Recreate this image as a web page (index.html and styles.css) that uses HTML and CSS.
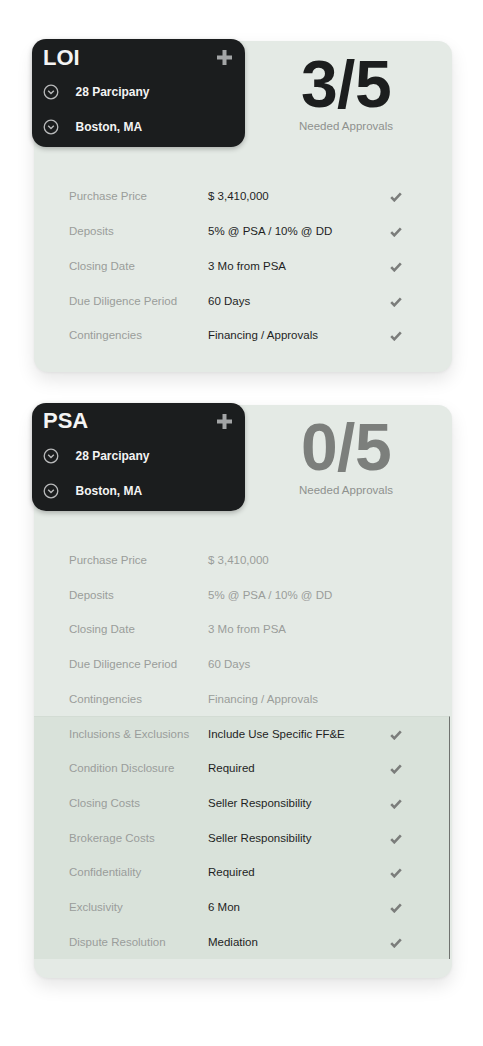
FILE: index.html
```html
<!DOCTYPE html>
<html lang="en">
<head>
<meta charset="utf-8">
<title>Deals</title>
<link rel="stylesheet" href="styles.css">
</head>
<body>
<main class="page">

  <section class="card">
    <div class="card-head">
      <div class="deal-box">
        <div class="deal-title">
          <span>LOI</span>
          <svg class="plus" viewBox="0 0 15 15" width="15" height="15"><path d="M7.5 0v15M0 7.5h15" stroke="#a3a5a6" stroke-width="4"/></svg>
        </div>
        <ul class="deal-items">
          <li><svg class="chev" viewBox="0 0 16 16" width="16" height="16"><circle cx="8" cy="8" r="6.8" fill="none" stroke="#b8b9ba" stroke-width="1.3"/><path d="M5.2 6.8 8 9.6l2.8-2.8" fill="none" stroke="#b8b9ba" stroke-width="1.4"/></svg><span>28 Parcipany</span></li>
          <li><svg class="chev" viewBox="0 0 16 16" width="16" height="16"><circle cx="8" cy="8" r="6.8" fill="none" stroke="#b8b9ba" stroke-width="1.3"/><path d="M5.2 6.8 8 9.6l2.8-2.8" fill="none" stroke="#b8b9ba" stroke-width="1.4"/></svg><span>Boston, MA</span></li>
        </ul>
      </div>
      <div class="approvals">
        <div class="count">3/5</div>
        <div class="count-label">Needed Approvals</div>
      </div>
    </div>
    <div class="terms">
      <div class="term"><span class="term-label">Purchase Price</span><span class="term-value">$ 3,410,000</span><svg class="check" viewBox="0 0 12 10" width="12" height="10"><path d="M1.2 5.2 4.3 8.3 10.8 1.4" fill="none" stroke="#7b7d7b" stroke-width="2.6"/></svg></div>
      <div class="term"><span class="term-label">Deposits</span><span class="term-value">5% @ PSA / 10% @ DD</span><svg class="check" viewBox="0 0 12 10" width="12" height="10"><path d="M1.2 5.2 4.3 8.3 10.8 1.4" fill="none" stroke="#7b7d7b" stroke-width="2.6"/></svg></div>
      <div class="term"><span class="term-label">Closing Date</span><span class="term-value">3 Mo from PSA</span><svg class="check" viewBox="0 0 12 10" width="12" height="10"><path d="M1.2 5.2 4.3 8.3 10.8 1.4" fill="none" stroke="#7b7d7b" stroke-width="2.6"/></svg></div>
      <div class="term"><span class="term-label">Due Diligence Period</span><span class="term-value">60 Days</span><svg class="check" viewBox="0 0 12 10" width="12" height="10"><path d="M1.2 5.2 4.3 8.3 10.8 1.4" fill="none" stroke="#7b7d7b" stroke-width="2.6"/></svg></div>
      <div class="term"><span class="term-label">Contingencies</span><span class="term-value">Financing / Approvals</span><svg class="check" viewBox="0 0 12 10" width="12" height="10"><path d="M1.2 5.2 4.3 8.3 10.8 1.4" fill="none" stroke="#7b7d7b" stroke-width="2.6"/></svg></div>
    </div>
  </section>

  <section class="card">
    <div class="card-head">
      <div class="deal-box">
        <div class="deal-title">
          <span>PSA</span>
          <svg class="plus" viewBox="0 0 15 15" width="15" height="15"><path d="M7.5 0v15M0 7.5h15" stroke="#a3a5a6" stroke-width="4"/></svg>
        </div>
        <ul class="deal-items">
          <li><svg class="chev" viewBox="0 0 16 16" width="16" height="16"><circle cx="8" cy="8" r="6.8" fill="none" stroke="#b8b9ba" stroke-width="1.3"/><path d="M5.2 6.8 8 9.6l2.8-2.8" fill="none" stroke="#b8b9ba" stroke-width="1.4"/></svg><span>28 Parcipany</span></li>
          <li><svg class="chev" viewBox="0 0 16 16" width="16" height="16"><circle cx="8" cy="8" r="6.8" fill="none" stroke="#b8b9ba" stroke-width="1.3"/><path d="M5.2 6.8 8 9.6l2.8-2.8" fill="none" stroke="#b8b9ba" stroke-width="1.4"/></svg><span>Boston, MA</span></li>
        </ul>
      </div>
      <div class="approvals">
        <div class="count count-muted">0/5</div>
        <div class="count-label">Needed Approvals</div>
      </div>
    </div>
    <div class="terms">
      <div class="term term-muted"><span class="term-label">Purchase Price</span><span class="term-value">$ 3,410,000</span></div>
      <div class="term term-muted"><span class="term-label">Deposits</span><span class="term-value">5% @ PSA / 10% @ DD</span></div>
      <div class="term term-muted"><span class="term-label">Closing Date</span><span class="term-value">3 Mo from PSA</span></div>
      <div class="term term-muted"><span class="term-label">Due Diligence Period</span><span class="term-value">60 Days</span></div>
      <div class="term term-muted"><span class="term-label">Contingencies</span><span class="term-value">Financing / Approvals</span></div>
      <div class="terms-active">
        <div class="term"><span class="term-label">Inclusions &amp; Exclusions</span><span class="term-value">Include Use Specific FF&amp;E</span><svg class="check" viewBox="0 0 12 10" width="12" height="10"><path d="M1.2 5.2 4.3 8.3 10.8 1.4" fill="none" stroke="#7b7d7b" stroke-width="2.6"/></svg></div>
        <div class="term"><span class="term-label">Condition Disclosure</span><span class="term-value">Required</span><svg class="check" viewBox="0 0 12 10" width="12" height="10"><path d="M1.2 5.2 4.3 8.3 10.8 1.4" fill="none" stroke="#7b7d7b" stroke-width="2.6"/></svg></div>
        <div class="term"><span class="term-label">Closing Costs</span><span class="term-value">Seller Responsibility</span><svg class="check" viewBox="0 0 12 10" width="12" height="10"><path d="M1.2 5.2 4.3 8.3 10.8 1.4" fill="none" stroke="#7b7d7b" stroke-width="2.6"/></svg></div>
        <div class="term"><span class="term-label">Brokerage Costs</span><span class="term-value">Seller Responsibility</span><svg class="check" viewBox="0 0 12 10" width="12" height="10"><path d="M1.2 5.2 4.3 8.3 10.8 1.4" fill="none" stroke="#7b7d7b" stroke-width="2.6"/></svg></div>
        <div class="term"><span class="term-label">Confidentiality</span><span class="term-value">Required</span><svg class="check" viewBox="0 0 12 10" width="12" height="10"><path d="M1.2 5.2 4.3 8.3 10.8 1.4" fill="none" stroke="#7b7d7b" stroke-width="2.6"/></svg></div>
        <div class="term"><span class="term-label">Exclusivity</span><span class="term-value">6 Mon</span><svg class="check" viewBox="0 0 12 10" width="12" height="10"><path d="M1.2 5.2 4.3 8.3 10.8 1.4" fill="none" stroke="#7b7d7b" stroke-width="2.6"/></svg></div>
        <div class="term"><span class="term-label">Dispute Resolution</span><span class="term-value">Mediation</span><svg class="check" viewBox="0 0 12 10" width="12" height="10"><path d="M1.2 5.2 4.3 8.3 10.8 1.4" fill="none" stroke="#7b7d7b" stroke-width="2.6"/></svg></div>
      </div>
    </div>
  </section>

</main>
</body>
</html>
```

FILE: styles.css
```css
* { box-sizing: border-box; }

html, body {
  margin: 0;
  padding: 0;
  background: #ffffff;
}

body {
  font-family: "Liberation Sans", Arial, sans-serif;
  color: #1c1d1d;
}

.page {
  display: flex;
  flex-direction: column;
  gap: 33px;
  padding: 41px 0 40px 34px;
}

.card {
  width: 418px;
  background: #e4eae5;
  border-radius: 14px;
  box-shadow: 0 8px 18px rgba(0, 0, 0, 0.10), 0 1px 3px rgba(0, 0, 0, 0.05);
  padding-bottom: 19px;
}

.card-head {
  display: flex;
  align-items: flex-start;
  height: 138px;
}

.deal-box {
  width: 213px;
  height: 108px;
  margin: -2px 0 0 -2px;
  background: #1b1d1e;
  border-radius: 14px;
  box-shadow: 0 2px 5px rgba(0, 0, 0, 0.25);
  color: #f4f4f4;
  flex-shrink: 0;
}

.deal-title {
  display: flex;
  justify-content: space-between;
  align-items: flex-start;
  padding: 5.5px 12.7px 0 11px;
  height: 31.5px;
}

.deal-title span {
  font-size: 22px;
  font-weight: 700;
  line-height: 26px;
}

.deal-title .plus {
  margin-top: 5.8px;
}

.deal-items {
  list-style: none;
  margin: 4.3px 0 0 0;
  padding: 0 0 0 11.3px;
}

.deal-items li {
  display: flex;
  align-items: center;
  height: 35px;
  font-size: 12px;
  font-weight: 700;
}

.deal-items .chev {
  margin-right: 16.2px;
  flex-shrink: 0;
}

.approvals {
  width: 120px;
  margin-left: 41px;
  text-align: center;
}

.count {
  margin-top: 9.5px;
  font-size: 66px;
  line-height: 66px;
  font-weight: 700;
  letter-spacing: -0.5px;
  color: #1c1e1e;
}

.count-muted {
  color: #7c7f7c;
}

.count-label {
  margin-top: 2.7px;
  font-size: 11.5px;
  line-height: 14px;
  color: #8e918e;
}

.terms {
  display: flex;
  flex-direction: column;
}

.term {
  display: grid;
  grid-template-columns: 139px 178px 20px;
  align-items: center;
  height: 34.73px;
  padding-left: 35px;
  font-size: 11.5px;
}

.term-label {
  color: #9a9d9a;
}

.term-value {
  color: #1e1f1f;
}

.term-muted .term-value {
  color: #9a9d9a;
}

.term .check {
  justify-self: center;
  margin-top: 2px;
}

.terms-active {
  margin-right: 2px;
  background: #d9e2da;
  border-right: 1.5px solid #6f726f;
  border-top: 1px solid #d3dcd4;
}

.terms-active .term:first-child {
  height: 33.73px;
}
```
